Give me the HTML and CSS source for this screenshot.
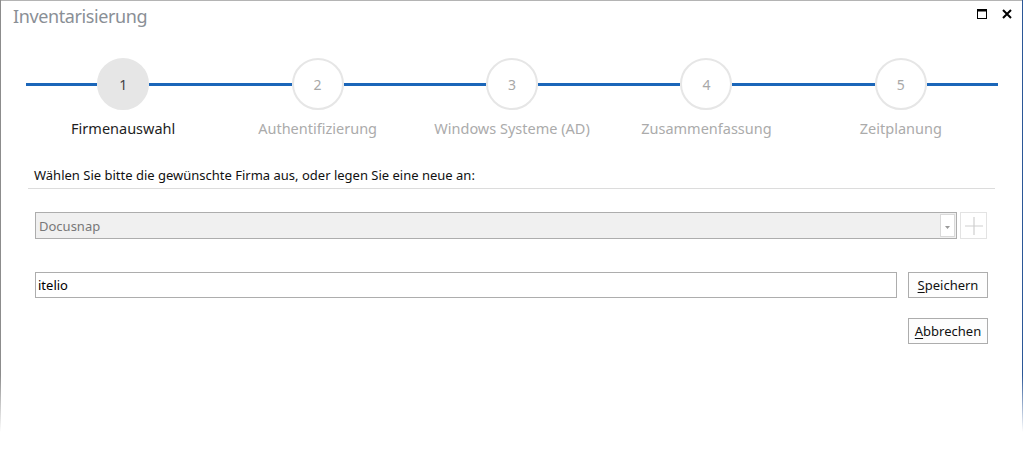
FILE: index.html
```html
<!DOCTYPE html>
<html lang="de">
<head>
<meta charset="utf-8">
<title>Inventarisierung</title>
<link rel="stylesheet" href="styles.css">
</head>
<body>
<div class="window">
  <div class="titlebar">
    <span class="title">Inventarisierung</span>
    <div class="controls">
      <svg class="ctl" width="10" height="10" viewBox="0 0 10 10"><rect x="0.5" y="0.5" width="9" height="9" fill="none" stroke="#000"/><rect x="0" y="0" width="10" height="2.5" fill="#000"/></svg>
      <svg class="ctl close" width="10" height="10" viewBox="0 0 10 10"><path d="M1 1 L9 9 M9 1 L1 9" stroke="#000" stroke-width="2"/></svg>
    </div>
  </div>

  <div class="stepper">
    <div class="step active">
      <div class="track"><span class="seg"></span><span class="circle">1</span><span class="seg"></span></div>
      <div class="label">Firmenauswahl</div>
    </div>
    <div class="step">
      <div class="track"><span class="seg"></span><span class="circle">2</span><span class="seg"></span></div>
      <div class="label">Authentifizierung</div>
    </div>
    <div class="step">
      <div class="track"><span class="seg"></span><span class="circle">3</span><span class="seg"></span></div>
      <div class="label">Windows Systeme (AD)</div>
    </div>
    <div class="step">
      <div class="track"><span class="seg"></span><span class="circle">4</span><span class="seg"></span></div>
      <div class="label">Zusammenfassung</div>
    </div>
    <div class="step">
      <div class="track"><span class="seg"></span><span class="circle">5</span><span class="seg"></span></div>
      <div class="label">Zeitplanung</div>
    </div>
  </div>

  <div class="content">
    <div class="prompt">Wählen Sie bitte die gewünschte Firma aus, oder legen Sie eine neue an:</div>
    <div class="divider"></div>

    <div class="row combo-row">
      <div class="combo">
        <span class="combo-text">Docusnap</span>
        <span class="drop"><svg width="5" height="3" viewBox="0 0 5 3"><path d="M0 0 H5 L2.5 3 Z" fill="#999"/></svg></span>
      </div>
      <div class="add-btn"><svg width="18" height="18" viewBox="0 0 18 18"><path d="M9 0 V18 M0 9 H18" stroke="#cfcfcf" stroke-width="1.2"/></svg></div>
    </div>

    <div class="row input-row">
      <div class="textbox">itelio</div>
      <button class="btn"><u>S</u>peichern</button>
    </div>

    <div class="row cancel-row">
      <button class="btn"><u>A</u>bbrechen</button>
    </div>
  </div>
</div>
</body>
</html>
```

FILE: styles.css
```css
* { box-sizing: border-box; }

html, body {
  margin: 0;
  padding: 0;
  background: #fff;
}

body {
  width: 1024px;
  height: 470px;
  overflow: hidden;
  font-family: "Noto Sans", "Open Sans", sans-serif;
  color: #000;
}

.window {
  width: 1023px;
  height: 470px;
  background:
    linear-gradient(to bottom, #8c8c8c 0, #8c8c8c 375px, rgba(140,140,140,0) 432px) left top / 1px 100% no-repeat,
    linear-gradient(to bottom, #2b5797 0, #2b5797 375px, rgba(43,87,151,0) 432px) right top / 1px 100% no-repeat,
    linear-gradient(#b4b4b4, #b4b4b4) left top / 100% 1px no-repeat,
    #fff;
  display: flex;
  flex-direction: column;
}

.titlebar {
  height: 34px;
  display: flex;
  align-items: flex-start;
  justify-content: space-between;
  padding: 3px 0 0 13px;
}

.title {
  font-size: 18px;
  color: #8a8f96;
  line-height: 26px;
  letter-spacing: -0.4px;
}

.controls {
  display: flex;
  gap: 15px;
  padding: 6px 11px 0 0;
}

.ctl { display: block; }

.stepper {
  display: flex;
  margin: 24px 0 0 26px;
  width: 972px;
}

.step {
  flex: 1;
  display: flex;
  flex-direction: column;
  align-items: center;
}

.track {
  width: 100%;
  display: flex;
  align-items: center;
  height: 52px;
}

.seg {
  flex: 1;
  height: 3px;
  background: #1b66b9;
}

.circle {
  width: 52px;
  height: 52px;
  border-radius: 50%;
  border: 2px solid #e6e6e6;
  background: #fff;
  display: flex;
  align-items: center;
  justify-content: center;
  font-size: 14px;
  color: #a8a8a8;
}

.step.active .circle {
  background: #e6e6e6;
  color: #444;
}

.label {
  margin-top: 8px;
  font-size: 14.5px;
  color: #ababab;
  line-height: 20px;
}

.step.active .label {
  color: #1e1e1e;
}

.content {
  padding: 0 0 0 34px;
  margin-top: 28px;
  font-size: 13px;
}

.prompt {
  line-height: 18px;
  color: #111;
}

.divider {
  height: 1px;
  background: #dcdcdc;
  margin: 4px 0 0 -6px;
  width: 967px;
}

.row {
  display: flex;
  align-items: center;
}

.combo-row {
  margin-top: 23px;
  margin-left: 1px;
}

.combo {
  width: 922px;
  height: 27px;
  border: 1px solid #adadad;
  background: #f0f0f0;
  display: flex;
  align-items: center;
  justify-content: space-between;
  padding: 0 1px 0 3px;
}

.combo-text {
  color: #787878;
  font-size: 13px;
}

.drop {
  width: 15px;
  height: 23px;
  border: 1px solid #d9d9d9;
  background: #fff;
  display: flex;
  align-items: center;
  justify-content: center;
  padding-top: 4px;
}

.drop svg { display: block; }

.add-btn {
  margin-left: 3px;
  width: 27px;
  height: 27px;
  border: 1px solid #e3e3e3;
  display: flex;
  align-items: center;
  justify-content: center;
}

.add-btn svg { display: block; }

.input-row {
  margin-top: 33px;
  margin-left: 1px;
}

.textbox {
  width: 862px;
  height: 26px;
  border: 1px solid #adadad;
  padding: 0 0 0 2px;
  line-height: 24px;
  font-size: 13px;
  color: #000;
}

.btn {
  margin-left: 11px;
  width: 80px;
  height: 26px;
  border: 1px solid #adadad;
  background: #fdfdfd;
  font-family: inherit;
  font-size: 13px;
  color: #111;
  padding: 0;
  border-radius: 0;
}

.btn u { text-decoration-thickness: 1px; text-underline-offset: 2px; }

.cancel-row {
  margin-top: 20px;
  justify-content: flex-end;
  width: 954px;
}
```
